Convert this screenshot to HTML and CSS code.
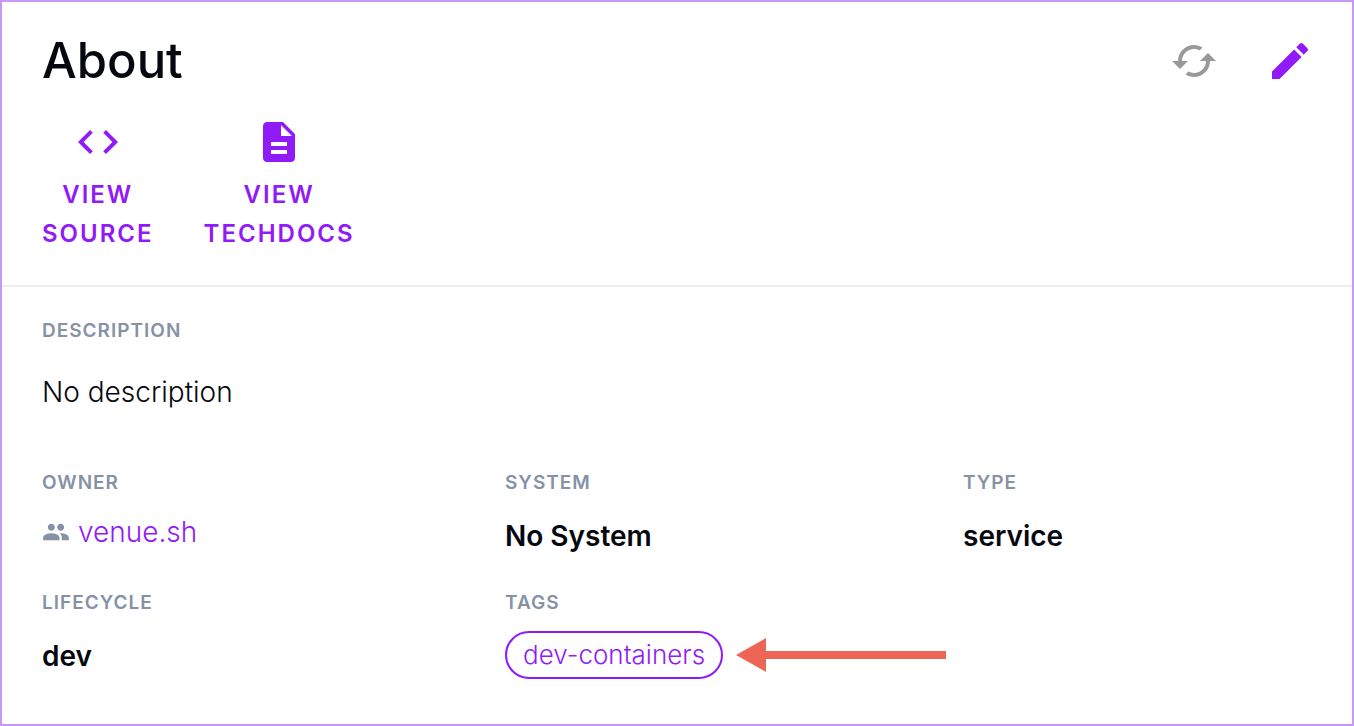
FILE: index.html
```html
<!DOCTYPE html>
<html lang="en">
<head>
  <meta charset="UTF-8">
  <meta name="viewport" content="width=device-width, initial-scale=1.0">
  <title>About</title>
  <link rel="stylesheet" href="styles.css">
</head>
<body>
  <main class="card">
    <header class="card-header">
      <div class="title-row">
        <h1>About</h1>
        <div class="actions">
          <button class="icon-button refresh" type="button" aria-label="Refresh">
            <svg class="icon" viewBox="0 0 24 24"><path d="M19 8l-4 4h3c0 3.31-2.69 6-6 6-1.01 0-1.97-.25-2.8-.7l-1.46 1.46C8.97 19.54 10.43 20 12 20c4.42 0 8-3.58 8-8h3l-4-4zM6 12c0-3.31 2.69-6 6-6 1.01 0 1.97.25 2.8.7l1.46-1.46C15.03 4.46 13.57 4 12 4c-4.42 0-8 3.58-8 8H1l4 4 4-4H6z"/></svg>
          </button>
          <button class="icon-button" type="button" aria-label="Edit">
            <svg class="icon" viewBox="0 0 24 24"><path d="M3 17.25V21h3.75L17.81 9.94l-3.75-3.75L3 17.25zM20.71 7.04c.39-.39.39-1.02 0-1.41l-2.34-2.34c-.39-.39-1.02-.39-1.41 0l-1.83 1.83 3.75 3.75 1.83-1.83z"/></svg>
          </button>
        </div>
      </div>
      <nav class="links">
        <a class="link" href="#">
          <svg class="icon" viewBox="0 0 24 24"><path d="M9.4 16.6L4.8 12l4.6-4.6L8 6l-6 6 6 6 1.4-1.4zm5.2 0l4.6-4.6-4.6-4.6L16 6l6 6-6 6-1.4-1.4z"/></svg>
          <span>View<br>Source</span>
        </a>
        <a class="link" href="#">
          <svg class="icon" viewBox="0 0 24 24"><path d="M14 2H6c-1.1 0-1.99.9-1.99 2L4 20c0 1.1.89 2 1.99 2H18c1.1 0 2-.9 2-2V8l-6-6zm2 16H8v-2h8v2zm0-4H8v-2h8v2zm-3-5V3.5L18.500 9H13z"/></svg>
          <span>View<br>TechDocs</span>
        </a>
      </nav>
    </header>

    <section class="details">
      <div class="field full">
        <h2>Description</h2>
        <p class="text">No description</p>
      </div>
      <div class="field">
        <h2>Owner</h2>
        <a class="owner" href="#">
          <svg class="icon-small" viewBox="0 0 24 24"><path d="M16 11c1.66 0 2.99-1.34 2.99-3S17.66 5 16 5c-1.66 0-3 1.34-3 3s1.34 3 3 3zm-8 0c1.66 0 2.99-1.34 2.99-3S9.66 5 8 5C6.34 5 5 6.34 5 8s1.34 3 3 3zm0 2c-2.33 0-7 1.17-7 3.5V19h14v-2.500c0-2.330-4.670-3.500-7-3.500zm8 0c-.29 0-.62.02-.97.05 1.160.840 1.970 1.970 1.970 3.450V19h6v-2.500c0-2.330-4.670-3.500-7-3.500z"/></svg>
          <span>venue.sh</span>
        </a>
      </div>
      <div class="field">
        <h2>System</h2>
        <p class="value">No System</p>
      </div>
      <div class="field">
        <h2>Type</h2>
        <p class="value">service</p>
      </div>
      <div class="field">
        <h2>Lifecycle</h2>
        <p class="value">dev</p>
      </div>
      <div class="field">
        <h2>Tags</h2>
        <div class="tags">
          <a class="tag" href="#">dev-containers</a>
          <svg class="arrow" viewBox="0 0 210 34"><path d="M0 17L30 0v13h180v8H30v13z"/></svg>
        </div>
      </div>
    </section>
  </main>
</body>
</html>
```
FILE: styles.css
```css
* {
  box-sizing: border-box;
  margin: 0;
  padding: 0;
}

body {
  font-family: Inter, sans-serif;
  background-color: #fff;
  color: #060810;
}

a {
  color: #911bf8;
  text-decoration: none;
}

.card {
  min-height: 100vh;
  border: 2px solid #c997fb;
}

.card-header {
  padding: 29px 38px 32px 40px;
  border-bottom: 2px solid #eee;
}

.title-row {
  display: flex;
  justify-content: space-between;
  align-items: center;
}

h1 {
  font-size: 49px;
  font-weight: 500;
  line-height: 60px;
}

.actions {
  display: flex;
  gap: 48px;
}

.icon-button {
  display: flex;
  border: none;
  background: none;
  color: #911bf8;
  cursor: pointer;
}

.refresh {
  color: #999;
}

.icon {
  width: 48px;
  height: 48px;
  fill: currentColor;
}

.links {
  display: flex;
  gap: 50px;
  margin-top: 27px;
}

.link {
  display: flex;
  flex-direction: column;
  align-items: center;
  gap: 9px;
  font-size: 24px;
  font-weight: 600;
  line-height: 39px;
  letter-spacing: 2px;
  text-align: center;
  text-transform: uppercase;
}

.details {
  display: grid;
  grid-template-columns: 463fr 458fr 389fr;
  row-gap: 31px;
  padding: 29px 0 30px 40px;
}

.full {
  grid-column: 1 / -1;
  margin-bottom: 26px;
}

h2 {
  color: #8592a6;
  font-size: 19px;
  font-weight: 600;
  line-height: 30px;
  letter-spacing: 1px;
  text-transform: uppercase;
}

.text {
  margin-top: 27px;
  font-size: 28px;
  font-weight: 300;
  line-height: 38px;
}

.value {
  margin-top: 17px;
  font-size: 28px;
  font-weight: 600;
  line-height: 42px;
}

.owner {
  display: flex;
  align-items: center;
  gap: 8px;
  margin-top: 17px;
  font-size: 28px;
  font-weight: 300;
  line-height: 34px;
}

.icon-small {
  width: 28px;
  height: 28px;
  fill: #8592a6;
}

.tags {
  display: flex;
  align-items: center;
  gap: 13px;
  margin-top: 13px;
}

.tag {
  padding: 0 16px;
  border: 2px solid #911bf8;
  border-radius: 24px;
  font-size: 26px;
  font-weight: 300;
  line-height: 44px;
}

.arrow {
  width: 210px;
  height: 34px;
  fill: #ed6555;
}
```
